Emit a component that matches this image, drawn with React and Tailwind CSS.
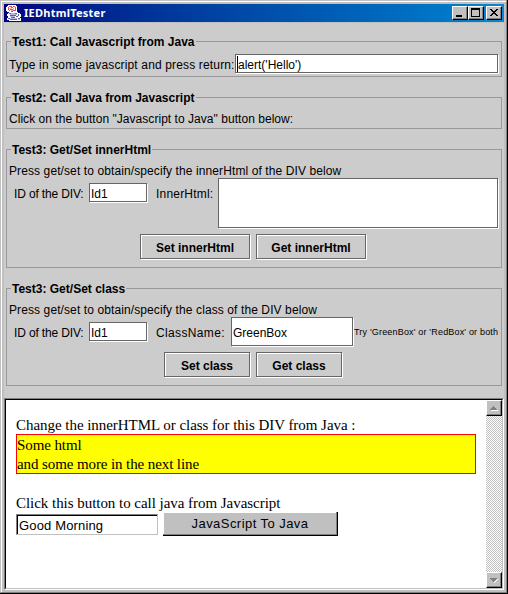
const flush =
  'shrink-0 border border-[#666] shadow-[1px_1px_0_#fff,inset_1px_1px_0_#fff]';

function Group({ title, className, children }) {
  return (
    <fieldset className={`mx-[2px] border border-[#999] ${className}`}>
      <legend className="ml-1 h-[15px] px-px text-[12px] leading-[17px] font-bold whitespace-nowrap">
        {title}
      </legend>
      {children}
    </fieldset>
  );
}

function Field({ className, children }) {
  return (
    <div className={`${flush} flex items-center bg-white pt-[2px] pl-px whitespace-pre ${className}`}>
      {children}
    </div>
  );
}

function MetalButton({ className, children }) {
  return (
    <button className={`${flush} h-[25px] pt-px text-center text-[12px] leading-[25px] font-bold ${className}`}>
      {children}
    </button>
  );
}

function WinButton({ className, children }) {
  return (
    <button
      className={`flex shrink-0 items-center justify-center border border-t-white border-r-black border-b-black border-l-white bg-[#c0c0c0] shadow-[inset_-1px_-1px_0_#808080] ${className}`}
    >
      {children}
    </button>
  );
}

function JavaIcon() {
  return (
    <svg width="16" height="16" viewBox="0 0 16 16" className="shrink-0" shapeRendering="crispEdges">
      <path d="M2 0h8v1h1v6h1v1h2v1h1v3h-1v1h1v3H3v-1H1v-2h1v-2H1V9h1V8h1V7H1V6H0V2h1V1h1z" fill="#fff" />
      <path d="M3 1h3v1H3zM7 1h2v1H7zM2 2h1v3H2zM9 2h1v4H9zM5 2h2v1H5zM4 4h3v1H4zM3 5h1v1H3zM7 5h2v1H7zM5 6h2v1H5z" fill="#e05050" />
      <path d="M4 3h2v1H4zM7 3h1v2H7zM5 5h2v1H5zM3 3h1v1H3z" fill="#f4b0b0" />
      <path d="M3 8h2v1H3zM9 8h2v1H9zM12 9h1v2h-1zM4 10h6v1H4zM10 11h2v1h-2zM5 12h4v1H5zM2 13h2v1H2zM4 14h7v1H4zM12 13h2v1h-2z" fill="#6060a8" />
      <path d="M5 8h4v1H5zM4 9h7v1H4zM4 11h5v1H4zM4 13h7v1H4zM12 14h2v1h-2z" fill="#b8b8e0" />
    </svg>
  );
}

export default function App() {
  return (
    <div className="h-[594px] w-[508px] overflow-hidden border-r border-b border-black bg-[#c0c0c0] font-['Liberation_Sans',Arial,sans-serif] text-[12px] text-black">
      <div className="h-[593px] w-[507px] border border-t-[#c0c0c0] border-r-[#808080] border-b-[#808080] border-l-[#c0c0c0]">
        <div className="h-[591px] w-[505px] border-t border-l border-white pt-[2px] pl-[2px]">
          <div className="w-[500px]">
            <header className="flex h-[18px] items-center bg-linear-to-r from-[#000080] to-[#1084d0] pr-[2px] pl-[2px]">
              <JavaIcon />
              <span className="ml-[2px] font-['Noto_Sans',sans-serif] text-[11px] leading-[18px] font-bold tracking-[0.25px] text-white">
                IEDhtmlTester
              </span>
              <div className="ml-auto flex">
                <WinButton className="h-[14px] w-4">
                  <svg width="14" height="12" shapeRendering="crispEdges"><path d="M3 8h6v2H3z" /></svg>
                </WinButton>
                <WinButton className="h-[14px] w-4">
                  <svg width="14" height="12" shapeRendering="crispEdges"><path fillRule="evenodd" d="M2 1h9v9H2zM3 3v6h7V3z" /></svg>
                </WinButton>
                <WinButton className="ml-[2px] h-[14px] w-4">
                  <svg width="14" height="12" shapeRendering="crispEdges">
                    <path d="M3 2h2v1h1v1h2V3h1V2h2v1h-1v1H9v1H8v1h1v1h1v1h1v1H9V8H8V7H6v1H5v1H3V8h1V7h1V6h1V5H5V4H4V3H3z" />
                  </svg>
                </WinButton>
              </div>
            </header>

            <main className="mt-px h-[567px] bg-[#ccc] pt-[11px]">
              <Group title="Test1: Call Javascript from Java" className="h-[43px]">
                <div className="mt-[5px] flex pl-[2px]">
                  <span className="w-[226px] shrink-0 leading-[23px] tracking-[0.15px] whitespace-nowrap">
                    Type in some javascript and press return:
                  </span>
                  <Field className="h-[19px] w-[263px]">
                    <span className="-mt-[2px] h-[16px] w-px bg-black" />
                    <span>alert('Hello')</span>
                  </Field>
                </div>
              </Group>

              <Group title="Test2: Call Java from Javascript" className="mt-[13px] h-[39px]">
                <p className="mt-[6px] pl-[2px] leading-[17px] tracking-[0.04px]">
                  Click on the button "Javascript to Java" button below:
                </p>
              </Group>

              <Group title="Test3: Get/Set innerHtml" className="mt-[13px] h-[126px]">
                <p className="mt-[6px] h-[15px] pl-[2px] leading-[17px] tracking-[0.1px]">
                  Press get/set to obtain/specify the innerHtml of the DIV below
                </p>
                <div className="flex h-[50px] pl-[7px]">
                  <span className="mt-[8px] w-[75px] shrink-0 leading-[17px] tracking-[-0.15px] whitespace-nowrap">ID of the DIV:</span>
                  <Field className="mt-[5px] h-[19px] w-[58px]">Id1</Field>
                  <span className="mt-[8px] ml-[9px] w-[62px] shrink-0 leading-[17px] tracking-[0.2px] whitespace-nowrap">InnerHtml:</span>
                  <Field className="h-[50px] w-[280px]" />
                </div>
                <div className="mt-[6px] flex gap-[6px] pl-[133px]">
                  <MetalButton className="w-[110px]">Set innerHtml</MetalButton>
                  <MetalButton className="w-[110px]">Get innerHtml</MetalButton>
                </div>
              </Group>

              <Group title="Test3: Get/Set class" className="mt-[13px] h-[105px]">
                <p className="mt-[6px] h-[15px] pl-[2px] leading-[17px] tracking-[0.1px]">
                  Press get/set to obtain/specify the class of the DIV below
                </p>
                <div className="flex h-[29px] pl-[7px]">
                  <span className="mt-[8px] w-[75px] shrink-0 leading-[17px] tracking-[-0.15px] whitespace-nowrap">ID of the DIV:</span>
                  <Field className="mt-[5px] h-[19px] w-[58px]">Id1</Field>
                  <span className="mt-[8px] ml-[9px] w-[75px] shrink-0 leading-[17px] tracking-[0.35px] whitespace-nowrap">ClassName:</span>
                  <Field className="h-[29px] w-[122px]">GreenBox</Field>
                  <span className="mt-[8px] ml-px text-[9px] leading-[15px] tracking-[0.18px] whitespace-nowrap">
                    Try 'GreenBox' or 'RedBox' or both
                  </span>
                </div>
                <div className="mt-[6px] flex gap-[6px] pl-[157px]">
                  <MetalButton className="w-[86px]">Set class</MetalButton>
                  <MetalButton className="w-[86px]">Get class</MetalButton>
                </div>
              </Group>

              <section className="mt-[12px] h-[192px] border border-t-[#808080] border-r-white border-b-white border-l-[#808080]">
                <div className="flex h-[190px] border border-t-black border-r-[#c0c0c0] border-b-[#c0c0c0] border-l-black bg-white">
                  <div className="w-[480px] pt-[15px] pl-[10px] font-['Liberation_Serif',serif] text-[15px] leading-[19px] tracking-[-0.04px]">
                    <p className="h-[19px] leading-[21px]">Change the innerHTML or class for this DIV from Java :</p>
                    <div className="h-[40px] w-[460px] border border-[#f00] bg-[#ff0] pt-px tracking-[-0.1px]">
                      Some html
                      <br />
                      and some more in the next line
                    </div>
                    <p className="mt-[19px] h-[19px] leading-[21px]">Click this button to call java from Javascript</p>
                    <div className="flex font-['Liberation_Sans',sans-serif] text-[13px] tracking-[0.15px]">
                      <div className="mt-[2px] h-[21px] w-[142px] border border-t-[#808080] border-r-[#c0c0c0] border-b-[#c0c0c0] border-l-[#808080] bg-white pl-[2px] leading-[21px] shadow-[inset_1px_1px_0_#000]">
                        Good Morning
                      </div>
                      <button className="ml-[5px] h-[24px] w-[175px] border-r border-b border-black bg-[#c0c0c0] leading-[21px] tracking-[0.45px] shadow-[inset_-1px_-1px_0_#808080,inset_1px_1px_0_#fff]">
                        JavaScript To Java
                      </button>
                    </div>
                  </div>
                  <div className="flex w-4 flex-col justify-between bg-[conic-gradient(#fff_25%,#c0c0c0_0_50%,#fff_0_75%,#c0c0c0_0)] bg-size-[2px_2px]">
                    <WinButton className="size-4">
                      <svg width="14" height="14" shapeRendering="crispEdges">
                        <path d="M4 9h7v1H4z" fill="#fff" />
                        <path d="M6 5h1v1h1v1h1v1h1v1H3V8h1V7h1V6h1z" fill="#808080" />
                      </svg>
                    </WinButton>
                    <WinButton className="size-4">
                      <svg width="14" height="14" shapeRendering="crispEdges">
                        <path d="M10 6h1v1h-1v1H9v1H8v1H7V9h1V8h1V7h1z" fill="#fff" />
                        <path d="M3 5h7v1H9v1H8v1H7v1H6V8H5V7H4V6H3z" fill="#808080" />
                      </svg>
                    </WinButton>
                  </div>
                </div>
              </section>
            </main>
          </div>
        </div>
      </div>
    </div>
  );
}
